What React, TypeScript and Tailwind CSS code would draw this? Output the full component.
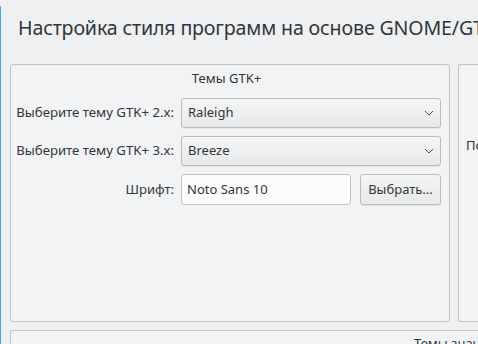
import React from "react";

const Chevron = () => (
  <svg width="10" height="6" viewBox="0 0 10 6" fill="none">
    <path d="M1 1 L5 5 L9 1" stroke="#4d4d4d" strokeWidth="1" />
  </svg>
);

const Combo = ({ value }: { value: string }) => (
  <div className="flex h-[30px] items-center justify-between rounded-[3px] border border-[#babcbe] bg-gradient-to-b from-[#f4f5f5] to-[#e8e9ea] pl-[6px] pr-[6px] shadow-[0_1px_0_rgba(0,0,0,0.06)]">
    <span>{value}</span>
    <Chevron />
  </div>
);

export default function App() {
  return (
    <div
      className="relative flex h-[344px] w-[478px] overflow-hidden bg-[#eff0f1] text-[13px] text-[#31363b]"
      style={{ fontFamily: '"Noto Sans", "DejaVu Sans", sans-serif' }}
    >
      <div className="mt-[6px] w-[1px] shrink-0 bg-[#3daee9]" />
      <div className="flex min-w-0 flex-1 flex-col">
        <div className="h-[64px] shrink-0 whitespace-nowrap pl-[17px] pt-[14px] text-[19.6px] leading-[28px] tracking-[-0.15px]">
          Настройка стиля программ на основе GNOME/GTK
        </div>
        <div className="flex shrink-0 gap-[8px] pl-[9px]">
          <div className="h-[258px] w-[440px] shrink-0 rounded-[3px] border border-[#c2c3c4] bg-[#f2f3f5] pr-[7px]">
            <div className="pt-[4px] text-center leading-[18px]">Темы GTK+</div>
            <div className="mt-[11px] grid grid-cols-[163px_260px] items-center gap-x-[7px] gap-y-[8px]">
              <div className="text-right text-[13.2px]">Выберите тему GTK+ 2.x:</div>
              <Combo value="Raleigh" />
              <div className="text-right text-[13.2px]">Выберите тему GTK+ 3.x:</div>
              <Combo value="Breeze" />
              <div className="text-right">Шрифт:</div>
              <div className="flex gap-[9px]">
                <div className="flex h-[31px] w-[170px] items-center rounded-[3px] border border-[#c2c3c4] bg-[#fcfcfc] pl-[5px]">
                  Noto Sans 10
                </div>
                <div className="flex h-[31px] w-[81px] items-center justify-center rounded-[3px] border border-[#babcbe] bg-gradient-to-b from-[#f4f5f5] to-[#e8e9ea] shadow-[0_1px_0_rgba(0,0,0,0.08)]">
                  Выбрать...
                </div>
              </div>
            </div>
          </div>
          <div className="h-[258px] w-[40px] shrink-0 rounded-l-[3px] border border-r-0 border-[#c2c3c4] bg-[#f2f3f5] pl-[7px] pt-[71px]">
            <span className="whitespace-nowrap leading-[18px]">По</span>
          </div>
        </div>
        <div className="ml-[9px] mt-[8px] h-[40px] shrink-0 rounded-tl-[3px] border-l border-t border-[#c2c3c4] bg-[#f2f3f5]">
          <div className="whitespace-nowrap pl-[403px] pt-[3px]">Темы значков</div>
        </div>
      </div>
    </div>
  );
}
